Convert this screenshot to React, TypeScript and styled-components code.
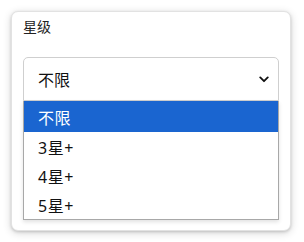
import { createGlobalStyle } from "styled-components";
import styled from "styled-components";

const Global = createGlobalStyle`
  html, body {
    margin: 0;
    padding: 0;
    background: #fff;
  }
  body {
    font-family: "Noto Sans", "Noto Sans CJK SC", sans-serif;
    color: #212529;
  }
`;

const options = ["不限", "3星+", "4星+", "5星+"];

const App = () => {
  return (
    <>
      <Global />
      <Card>
        <Label>星级</Label>
        <Field>
          <Select>
            <Value>不限</Value>
            <Chevron viewBox="0 0 12 8" aria-hidden>
              <path
                d="M1.5 1.5 L6 6 L10.5 1.5"
                fill="none"
                stroke="#111"
                strokeWidth="2.2"
                strokeLinecap="round"
                strokeLinejoin="round"
              />
            </Chevron>
          </Select>
          <List>
            {options.map((o, i) => (
              <Option key={o} $active={i === 0}>
                {o}
              </Option>
            ))}
          </List>
        </Field>
      </Card>
    </>
  );
};

const Card = styled.div`
  margin: 11px;
  width: 280px;
  height: 220px;
  box-sizing: border-box;
  background: #fff;
  border-radius: 7px;
  border: 1px solid #e2e2e2;
  box-shadow: 0 1px 3px rgba(0, 0, 0, 0.16), 0 2px 9px rgba(0, 0, 0, 0.16);
  padding: 7px 11px;
`;
const Label = styled.div`
  font-size: 14px;
  line-height: 16px;
  color: #222;
`;
const Field = styled.div`
  position: relative;
  margin-top: 22px;
`;
const Select = styled.div`
  height: 44px;
  box-sizing: border-box;
  border: 1px solid #cfcfcf;
  border-radius: 5px 5px 0 0;
  display: flex;
  align-items: center;
  justify-content: space-between;
  padding: 0 9px 0 14px;
  background: #fff;
`;
const Value = styled.span`
  font-size: 16px;
  color: #111;
`;
const Chevron = styled.svg`
  width: 10px;
  height: 7px;
`;
const List = styled.div`
  position: absolute;
  left: 0;
  right: 0;
  top: 44px;
  border: 1px solid #a8a8a8;
  border-top: none;
  background: #fff;
  box-shadow: 0 2px 4px rgba(0, 0, 0, 0.12);
`;
const Option = styled.div<{ $active: boolean }>`
  height: 29px;
  display: flex;
  align-items: center;
  padding-left: 14px;
  font-size: 16px;
  letter-spacing: 0.5px;
  color: ${(p) => (p.$active ? "#fff" : "#111")};
  background: ${(p) => (p.$active ? "#1a65d0" : "#fff")};
  &:first-child {
    height: 31px;
  }
`;

export default App;
